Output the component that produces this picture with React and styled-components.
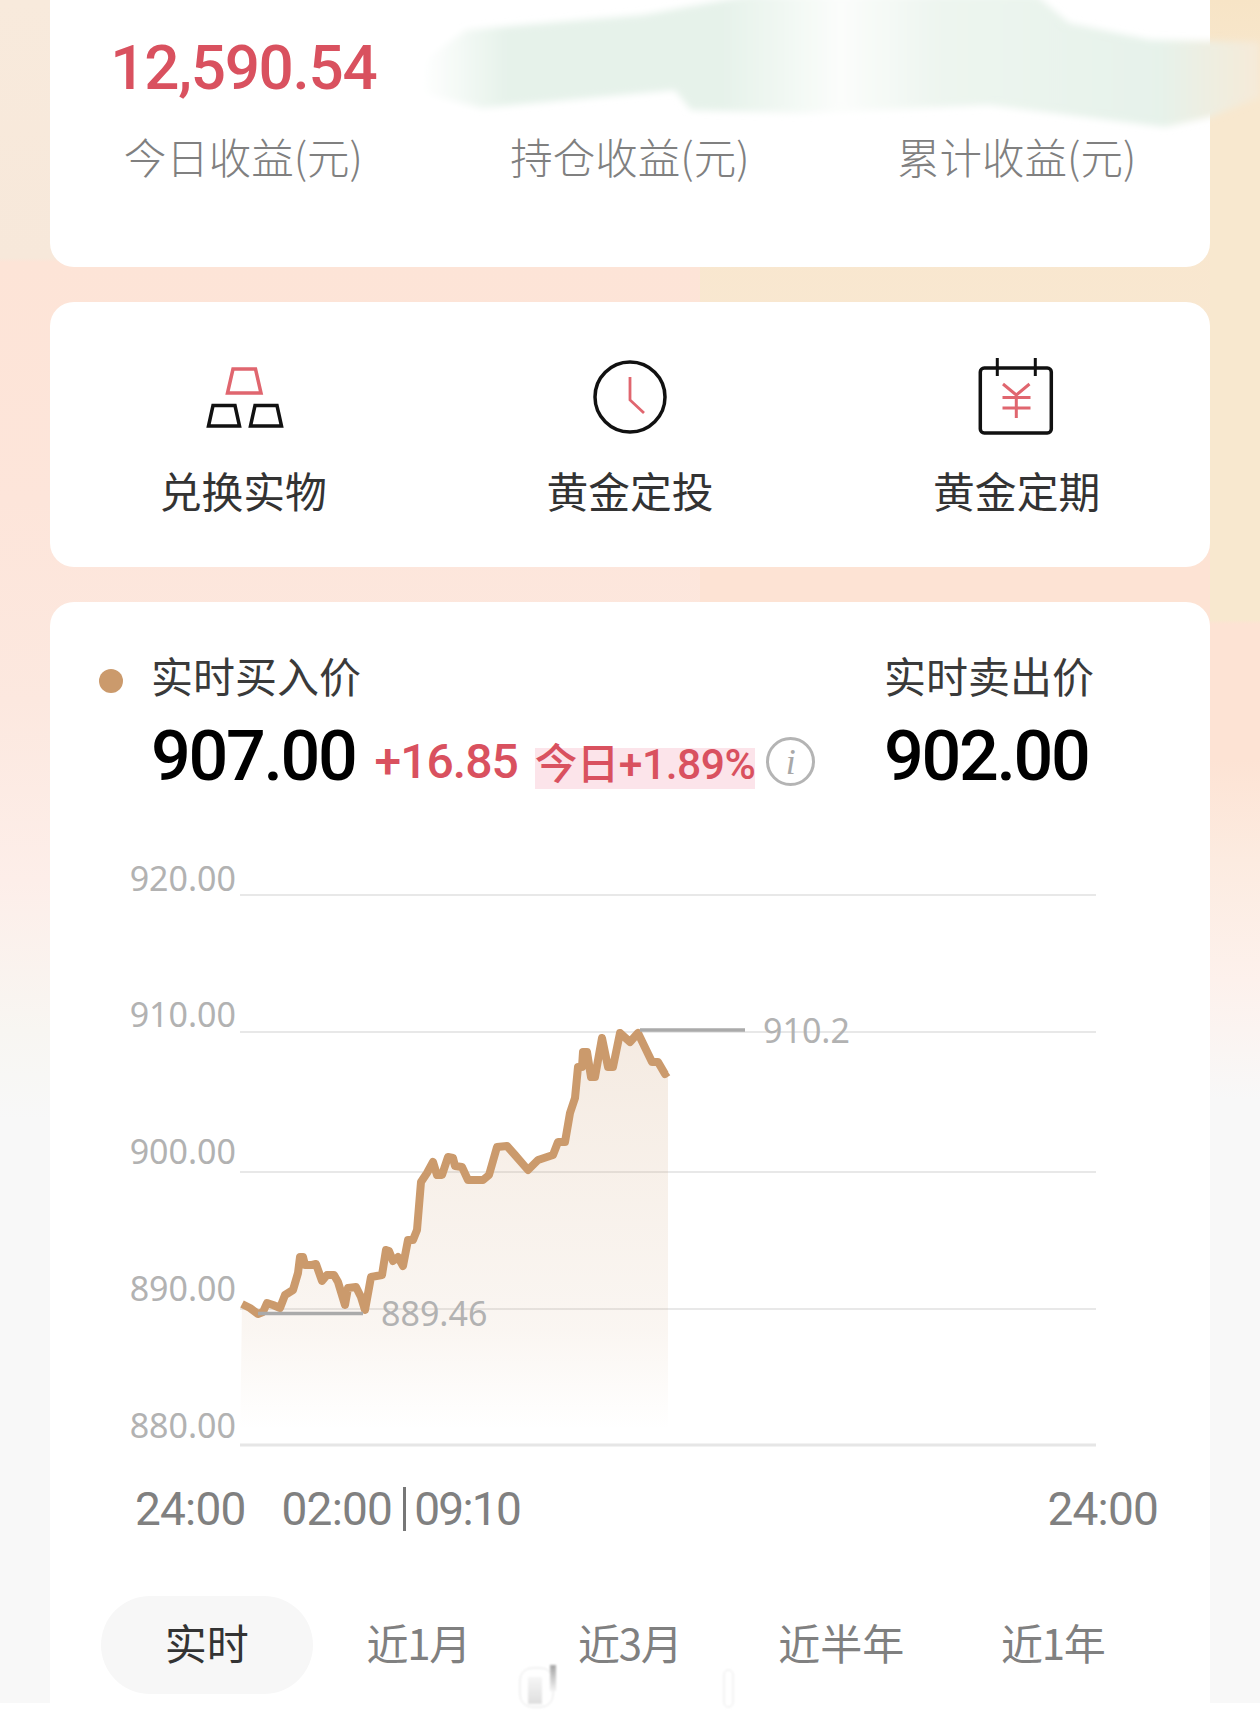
import React from "react";
import styled, { createGlobalStyle } from "styled-components";

const GlobalStyle = createGlobalStyle`
  html, body {
    margin: 0;
    padding: 0;
    background: #fff;
  }
  * {
    box-sizing: border-box;
  }
`;

const cjk = `"Noto Sans CJK SC", "Noto Sans", sans-serif`;
const din = `Roboto, "Liberation Sans", "Noto Sans CJK SC", sans-serif`;

const RED = "#d9515f";
const GOLD = "#cb9a6c";

const summary = ["今日收益(元)", "持仓收益(元)", "累计收益(元)"];
const tabs = ["实时", "近1月", "近3月", "近半年", "近1年"];
const gridLines = [
  { y: 895, labelY: 891, value: "920.00" },
  { y: 1032, labelY: 1027, value: "910.00" },
  { y: 1172, labelY: 1164, value: "900.00" },
  { y: 1309, labelY: 1301, value: "890.00" },
  { y: 1445, labelY: 1438, value: "880.00", strong: true },
];

// 从截图里量出来的走势点 (x, y)
const linePoints = [
  [242, 1304], [250, 1308], [258, 1314], [263, 1312], [267, 1303], [273, 1305], [280, 1308],
  [285, 1295], [293, 1290], [298, 1273], [300, 1257], [303, 1257], [305, 1265], [312, 1265],
  [316, 1264], [322, 1281], [327, 1275], [334, 1275], [338, 1282], [345, 1305], [348, 1288],
  [356, 1287], [361, 1297], [365, 1310], [371, 1277], [382, 1275], [386, 1250], [389, 1251],
  [393, 1261], [398, 1257], [403, 1266], [408, 1240], [413, 1240], [417, 1230], [421, 1182],
  [427, 1173], [433, 1162], [437, 1175], [442, 1175], [448, 1157], [453, 1158], [455, 1166],
  [462, 1167], [468, 1180], [483, 1180], [489, 1175], [497, 1147], [507, 1146], [515, 1155],
  [528, 1170], [538, 1160], [553, 1155], [558, 1142], [565, 1142], [570, 1113], [575, 1098],
  [578, 1067], [582, 1067], [583, 1052], [587, 1052], [591, 1077], [595, 1077], [602, 1038],
  [608, 1067], [613, 1067], [620, 1033], [630, 1042], [638, 1033], [652, 1062], [658, 1062],
  [665, 1074], [668, 1072],
];

const linePath = linePoints.map(([x, y]) => `${x},${y}`).join(" ");
const areaPath = `240,1445 ${linePath} 668,1445`;

const Page = styled.div`
  position: relative;
  width: 1260px;
  height: 1721px;
  overflow: hidden;
  padding: 0 50px 18px;
  font-family: ${cjk};
  background-color: #fff;
  background-image:
    linear-gradient(180deg, #f8eadc 0, #f7e8da 258px, #fde4d7 262px, #fde5da 500px, #fce8df 700px, #fdeee9 880px, #f8f6f2 1030px, #f8f8f8 1120px),
    linear-gradient(180deg, #f7e5ca 0, #f9e8d2 400px, #fae6d0 500px, #fde3d4 545px, #fde3d4 760px, #fcebe0 860px, #fdf1ec 980px, #f8f8f8 1100px),
    linear-gradient(180deg, #f7e4c6 0, #f8e8cf 100px, #f8e8cf 620px, #fde3d4 624px, #fde3d4 760px, #fcebe0 860px, #fdf1ec 980px, #f8f8f8 1100px);
  background-size: 700px 1703px, 510px 1703px, 50px 1703px;
  background-position: 0 0, 700px 0, 1210px 0;
  background-repeat: no-repeat;
`;

const Stack = styled.div`
  display: flex;
  flex-direction: column;
  gap: 35px;
`;

const Card = styled.section`
  background: #fff;
  border-radius: ${(props) => props.$radius || "24px"};
`;

const SummaryCard = styled(Card)`
  height: 267px;
  padding-top: 38px;
`;

const ThreeCols = styled.div`
  display: grid;
  grid-template-columns: repeat(3, 1fr);
  text-align: center;
`;

const SummaryValue = styled.div`
  font-family: ${din};
  font-size: 62px;
  font-weight: 500;
  line-height: 60px;
  letter-spacing: -1.3px;
  color: ${RED};
`;

const SummaryLabel = styled.div`
  margin-top: 33px;
  font-size: 42.5px;
  line-height: 50px;
  font-weight: 300;
  color: #808080;
`;

const ActionCard = styled(Card)`
  height: 265px;
  padding-top: 56px;
`;

const ActionItem = styled.div`
  display: flex;
  flex-direction: column;
  align-items: center;
`;

const ActionIcon = styled.svg`
  display: block;
  width: 80px;
  height: 80px;
  overflow: visible;
  fill: none;
`;

const ActionLabel = styled.div`
  margin-top: 27px;
  font-size: 41.8px;
  line-height: 50px;
  color: #333;
`;

const PriceCard = styled(Card)`
  height: 1101px;
  padding-top: 48px;
`;

const PriceHeader = styled.div`
  display: flex;
  justify-content: space-between;
  padding: 0 116px 0 49px;
`;

const BuyBlock = styled.div`
  display: flex;
  gap: 28px;
`;

const Dot = styled.span`
  flex: none;
  width: 24px;
  height: 24px;
  margin-top: 19px;
  border-radius: 50%;
  background: ${GOLD};
`;

const PriceLabel = styled.div`
  font-size: 42px;
  line-height: 50px;
  color: #3a3a3a;
`;

const PriceRow = styled.div`
  display: flex;
  align-items: center;
  height: 80px;
  margin-top: 16px;
`;

const PriceValue = styled.div`
  font-family: ${din};
  font-size: 70px;
  font-weight: 500;
  line-height: 80px;
  letter-spacing: -2.3px;
  color: #000;
`;

const Change = styled.span`
  margin: 12px 0 0 19px;
  font-family: ${din};
  font-size: 48px;
  font-weight: 500;
  line-height: 50px;
  letter-spacing: -1px;
  color: ${RED};
`;

const TodayChange = styled.span`
  display: block;
  height: 41px;
  margin: 25px 0 0 17px;
  font-family: ${din};
  font-size: 42.6px;
  font-weight: 500;
  line-height: 33px;
  letter-spacing: -0.5px;
  white-space: nowrap;
  color: ${RED};
  background: #fce4ea;
`;

const InfoBadge = styled.span`
  display: flex;
  align-items: center;
  justify-content: center;
  width: 49px;
  height: 49px;
  margin: 11px 0 0 11px;
  border: 3px solid #b4b4b4;
  border-radius: 50%;
  font-family: "Liberation Serif", serif;
  font-style: italic;
  font-size: 36px;
  color: #a8a8a8;
`;

const ChartSvg = styled.svg`
  display: block;
  width: 1160px;
  height: 610px;
  margin-top: 54px;
`;

const AxisText = styled.text`
  font-family: "Noto Sans", sans-serif;
  font-size: 34px;
  fill: #b2b2b2;
`;

const TimeRow = styled.div`
  display: flex;
  justify-content: space-between;
  align-items: center;
  height: 60px;
  margin-top: 19px;
  padding: 0 52px 0 85px;
  font-family: ${din};
  font-size: 46px;
  letter-spacing: -0.8px;
  color: #808080;
`;

const TimeGroup = styled.div`
  display: flex;
  align-items: center;
`;

const TimeSpacer = styled.span`
  width: 36px;
`;

const TimeDivider = styled.span`
  width: 3px;
  height: 44px;
  margin: 0 8px 0 11px;
  background: #777;
`;

const NarrowTime = styled.span`
  letter-spacing: -1.7px;
`;

const TabBar = styled.div`
  display: grid;
  grid-template-columns: repeat(5, 211.5px);
  margin-top: 57px;
  padding-left: 51px;
`;

const Tab = styled.div`
  height: 98px;
  border-radius: 49px;
  font-size: 42px;
  line-height: 92px;
  text-align: center;
  letter-spacing: ${(props) => (props.$tight ? "-1.2px" : "0")};
  color: ${(props) => (props.$active ? "#333" : "#808080")};
  background: ${(props) => (props.$active ? "#f7f7f7" : "transparent")};
`;

const Smear = styled.svg`
  position: absolute;
  left: 0;
  top: 0;
  width: 1260px;
  height: 140px;
`;

const BottomMark = styled.svg`
  position: absolute;
  left: 500px;
  top: 1655px;
  width: 260px;
  height: 60px;
`;

const GoldIcon = () => (
  <ActionIcon viewBox="0 0 80 80">
    <path d="M30 11 H52.5 L58 35 H24.5 Z" stroke="#e0666f" strokeWidth="3.5" />
    <path d="M10 47.5 H32 L36.5 68 H5.5 Z" stroke="#111" strokeWidth="3.5" />
    <path d="M52 47.5 H74 L78.5 68 H47.5 Z" stroke="#111" strokeWidth="3.5" />
  </ActionIcon>
);

const ClockIcon = () => (
  <ActionIcon viewBox="0 0 80 80">
    <circle cx="40" cy="39" r="35" stroke="#111" strokeWidth="3.5" />
    <path d="M40 19 V42 L54 55" stroke="#e0666f" strokeWidth="2.8" />
  </ActionIcon>
);

const CalendarIcon = () => (
  <ActionIcon viewBox="0 0 80 80">
    <rect x="3.3" y="10" width="71" height="65" rx="4" stroke="#111" strokeWidth="3.5" />
    <path d="M20.3 0 V18 M58.3 0 V18" stroke="#111" strokeWidth="3" />
    <path
      d="M26 26 L39.3 37 L52.5 26 M39.3 37 V60 M25.5 39.5 H53.5 M25.5 50 H53.5"
      stroke="#e0666f"
      strokeWidth="3"
    />
  </ActionIcon>
);

const actions = [
  { label: "兑换实物", Icon: GoldIcon },
  { label: "黄金定投", Icon: ClockIcon },
  { label: "黄金定期", Icon: CalendarIcon },
];

const PriceChart = () => (
  <ChartSvg viewBox="50 850 1160 610">
    <defs>
      <linearGradient id="areaFill" x1="0" y1="1030" x2="0" y2="1430" gradientUnits="userSpaceOnUse">
        <stop offset="0" stopColor={GOLD} stopOpacity="0.2" />
        <stop offset="0.75" stopColor={GOLD} stopOpacity="0.09" />
        <stop offset="1" stopColor={GOLD} stopOpacity="0" />
      </linearGradient>
    </defs>
    {gridLines.map((line) => (
      <g key={line.value}>
        <line
          x1="240"
          x2="1096"
          y1={line.y}
          y2={line.y}
          stroke={line.strong ? "#e6e6e6" : "#e8e8e8"}
          strokeWidth={line.strong ? 3 : 2}
        />
        <AxisText x="236" y={line.labelY} textAnchor="end">
          {line.value}
        </AxisText>
      </g>
    ))}
    <polygon points={areaPath} fill="url(#areaFill)" />
    <polyline points={linePath} fill="none" stroke={GOLD} strokeWidth="8" strokeLinejoin="round" />
    <line x1="640" x2="745" y1="1030" y2="1030" stroke="#aaa" strokeWidth="3.5" />
    <AxisText x="763" y="1043">910.2</AxisText>
    <line x1="258" x2="363" y1="1313.5" y2="1313.5" stroke="#aaa" strokeWidth="3.5" />
    <AxisText x="381" y="1326">889.46</AxisText>
  </ChartSvg>
);

const App = () => {
  return (
    <Page>
      <GlobalStyle />
      <Stack>
        <SummaryCard $radius="0 0 24px 24px">
          <ThreeCols>
            <SummaryValue>12,590.54</SummaryValue>
          </ThreeCols>
          <ThreeCols>
            {summary.map((label) => (
              <SummaryLabel key={label}>{label}</SummaryLabel>
            ))}
          </ThreeCols>
        </SummaryCard>

        <ActionCard>
          <ThreeCols>
            {actions.map(({ label, Icon }) => (
              <ActionItem key={label}>
                <Icon />
                <ActionLabel>{label}</ActionLabel>
              </ActionItem>
            ))}
          </ThreeCols>
        </ActionCard>

        <PriceCard $radius="24px 24px 0 0">
          <PriceHeader>
            <BuyBlock>
              <Dot />
              <div>
                <PriceLabel>实时买入价</PriceLabel>
                <PriceRow>
                  <PriceValue>907.00</PriceValue>
                  <Change>+16.85</Change>
                  <TodayChange>今日+1.89%</TodayChange>
                  <InfoBadge>i</InfoBadge>
                </PriceRow>
              </div>
            </BuyBlock>
            <div>
              <PriceLabel>实时卖出价</PriceLabel>
              <PriceRow>
                <PriceValue>902.00</PriceValue>
              </PriceRow>
            </div>
          </PriceHeader>

          <PriceChart />

          <TimeRow>
            <TimeGroup>
              <span>24:00</span>
              <TimeSpacer />
              <span>02:00</span>
              <TimeDivider />
              <NarrowTime>09:10</NarrowTime>
            </TimeGroup>
            <span>24:00</span>
          </TimeRow>

          <TabBar>
            {tabs.map((tab, index) => (
              <Tab key={tab} $active={index === 0} $tight={/\d/.test(tab)}>
                {tab}
              </Tab>
            ))}
          </TabBar>
        </PriceCard>
      </Stack>

      {/* 截图上的涂抹痕迹 */}
      <Smear viewBox="0 0 1260 140">
        <defs>
          <linearGradient id="smearFill" x1="0" x2="1" y1="0" y2="0">
            <stop offset="0" stopColor="#ffffff" />
            <stop offset="0.1" stopColor="#e6f2ea" />
            <stop offset="0.36" stopColor="#e6f2ea" />
            <stop offset="0.5" stopColor="#fbfdfb" />
            <stop offset="0.62" stopColor="#edf5ef" />
            <stop offset="0.88" stopColor="#e6f2ea" />
            <stop offset="1" stopColor="#f6ead8" />
          </linearGradient>
          <filter id="smearBlur">
            <feGaussianBlur stdDeviation="3.5" />
          </filter>
        </defs>
        <polygon
          points="426,60 466,30 643,15 748,-4 1037,-4 1069,23 1150,40 1260,42 1260,97 1210,117 1165,127 989,105 804,113 691,110 675,90 482,108 422,93"
          fill="url(#smearFill)"
          filter="url(#smearBlur)"
        />
      </Smear>
      <BottomMark viewBox="500 1655 260 60">
        <defs>
          <linearGradient id="markFill" x1="0" x2="0" y1="0" y2="1">
            <stop offset="0" stopColor="#f6f6f6" />
            <stop offset="1" stopColor="#dedede" />
          </linearGradient>
          <linearGradient id="markEdge" x1="0" x2="0" y1="0" y2="1">
            <stop offset="0" stopColor="#a4a4a4" />
            <stop offset="1" stopColor="#f2f2f2" />
          </linearGradient>
          <filter id="markBlur">
            <feGaussianBlur stdDeviation="1" />
          </filter>
        </defs>
        <g filter="url(#markBlur)">
          <rect x="520" y="1668" width="33" height="39" rx="12" fill="#fff" stroke="#e4e4e4" />
          <rect x="528" y="1677" width="14" height="27" fill="url(#markFill)" />
          <rect x="550" y="1665" width="6" height="26" fill="url(#markEdge)" />
          <rect x="724" y="1670" width="9" height="37" rx="4.5" fill="#fff" stroke="#e6e6e6" />
        </g>
      </BottomMark>
    </Page>
  );
};

export default App;
